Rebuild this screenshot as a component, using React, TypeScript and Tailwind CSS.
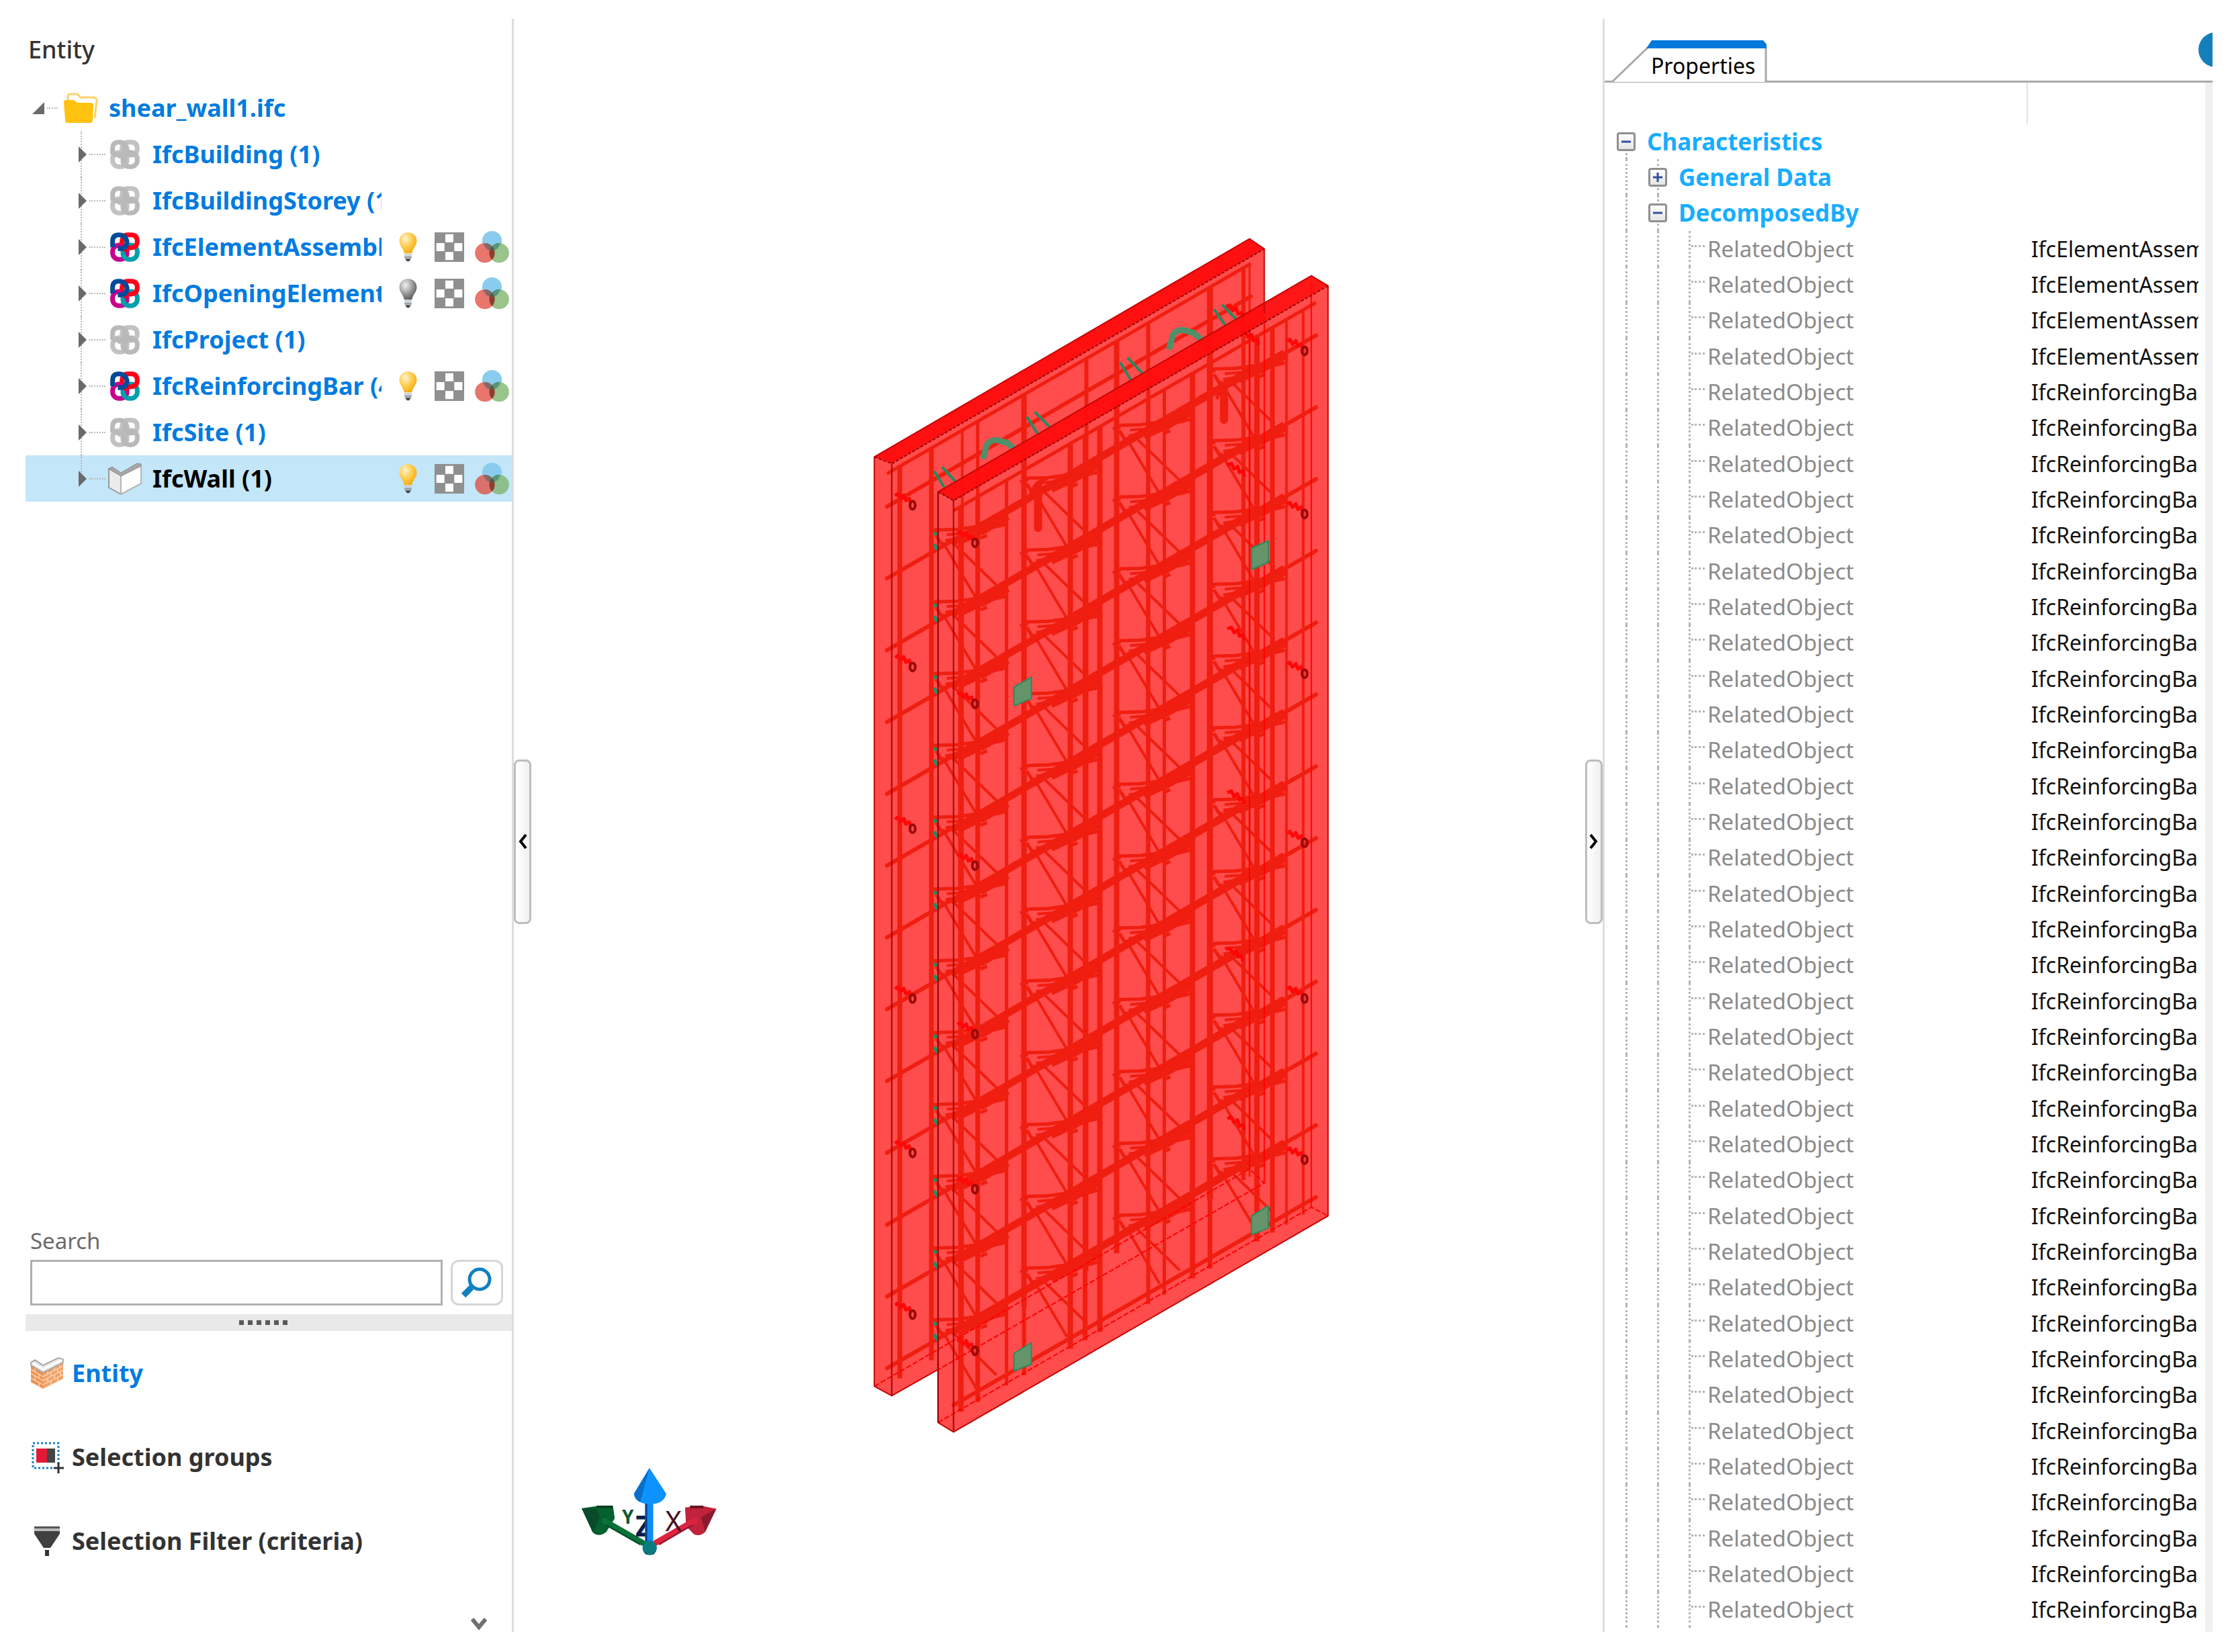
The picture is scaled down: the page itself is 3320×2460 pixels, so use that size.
import { useState } from 'react';
import type { ReactNode } from 'react';

type EntityIcon = 'muted' | 'ifc' | 'wall';

interface EntityRow {
  label: string;
  icon: EntityIcon;
  light?: 'on' | 'off';
}

interface PropertyRow {
  name: string;
  value?: string;
  depth: 0 | 1 | 2;
  open?: boolean;
}

const entities: EntityRow[] = [
  { label: 'IfcBuilding (1)', icon: 'muted' },
  { label: 'IfcBuildingStorey (1)', icon: 'muted' },
  { label: 'IfcElementAssembly (4)', icon: 'ifc', light: 'on' },
  { label: 'IfcOpeningElement (4)', icon: 'ifc', light: 'off' },
  { label: 'IfcProject (1)', icon: 'muted' },
  { label: 'IfcReinforcingBar (42)', icon: 'ifc', light: 'on' },
  { label: 'IfcSite (1)', icon: 'muted' },
  { label: 'IfcWall (1)', icon: 'wall', light: 'on' }
];

const properties: PropertyRow[] = [
  { name: 'Characteristics', depth: 0, open: true },
  { name: 'General Data', depth: 1, open: false },
  { name: 'DecomposedBy', depth: 1, open: true },
  ...Array.from({ length: 39 }, (_, i): PropertyRow => ({
    name: 'RelatedObject',
    value: i < 4 ? 'IfcElementAssembly' : 'IfcReinforcingBar',
    depth: 2
  }))
];

/* ---------- icons ---------- */

function FolderIcon() {
  return (
    <svg viewBox="0 0 52 46" className="h-[46px] w-[52px] shrink-0">
      <path d="M7 12V6q0-4 4-4h10l5 5h19q5 0 5 5l-3 26" fill="#fff" stroke="#fbd36b" strokeWidth="3" />
      <path d="M1 14q0-3 3-3h12l5 4h20q4 0 4 4l-1 22q0 4-4 4H7q-4 0-4-4z" fill="#ffc20e" />
    </svg>
  );
}

function IfcIcon({ muted }: { muted: boolean }) {
  const [blue, red, magenta, teal] = muted
    ? ['#b9b9b9', '#c2c2c2', '#c2c2c2', '#b9b9b9']
    : ['#004a98', '#ff0018', '#c8008c', '#009fae'];
  return (
    <svg viewBox="0 0 132 132" className="size-11 shrink-0" fill="none" strokeWidth="21">
      <rect x="11" y="57" width="64" height="64" rx="28" stroke={magenta} />
      <rect x="57" y="57" width="64" height="64" rx="28" stroke={teal} />
      <path d="M52 55q0-44 26-44h15q28 0 28 28t-28 30h-12q-10 0-10 18" stroke={red} />
      <path d="M11 66V39q0-28 28-28t36 28v4q0 26-24 30H34" stroke={blue} />
      {muted && <path d="M66 12v108M12 66h108" stroke={blue} strokeWidth="22" />}
    </svg>
  );
}

function WallIcon() {
  return (
    <svg viewBox="0 0 50 48" className="h-12 w-[50px] shrink-0" strokeLinejoin="round">
      <path d="M1 9l18 10v28L1 37z" fill="#ebebeb" stroke="#9a9a9a" strokeWidth="2" />
      <path d="M19 19L49 4v27L19 47z" fill="#fff" stroke="#b5b5b5" strokeWidth="2" />
      <path d="M1 9l5-3 13 9L43 1l6 1v3L19 20z" fill="#a8a8a8" stroke="#8a8a8a" strokeWidth="1" />
    </svg>
  );
}

function BulbIcon({ on }: { on: boolean }) {
  const id = on ? 'bulb-on' : 'bulb-off';
  return (
    <svg viewBox="0 0 80 132" className="h-11 w-[27px]">
      <defs>
        <radialGradient id={id} cx="0.35" cy="0.3" r="0.8">
          <stop offset="0" stopColor={on ? '#fff3cf' : '#f2f2f2'} />
          <stop offset="0.45" stopColor={on ? '#ffcf55' : '#a5a5a5'} />
          <stop offset="1" stopColor={on ? '#f5a300' : '#4c4c4c'} />
        </radialGradient>
      </defs>
      <path d="M40 1C16 1 1 18 1 38c0 22 19 34 22 56h34c3-22 22-34 22-56C79 18 64 1 40 1z" fill={`url(#${id})`} />
      <path d="M23 96h34v8H23z" fill="#c9d3dc" />
      <path d="M24 106h32v10H24z" fill="#9ba3aa" />
      <path d="M27 118h26l-8 12H35z" fill="#44474d" />
    </svg>
  );
}

function CheckerIcon() {
  return (
    <svg viewBox="0 0 132 132" className="size-11">
      <path d="M0 0h132v132H0z" fill="#8f8f8f" />
      <path d="M48 8h36v36H48zM8 48h36v36H8zM88 48h36v36H88zM48 88h36v36H48z" fill="#fff" />
    </svg>
  );
}

function ColorsIcon() {
  return (
    <svg viewBox="0 0 152 144" className="h-12 w-[51px]">
      <circle cx="76" cy="44" r="44" fill="#8accee" />
      <circle cx="108" cy="98" r="44" fill="#7fb56f" fillOpacity="0.8" />
      <circle cx="44" cy="98" r="44" fill="#e0483c" fillOpacity="0.75" />
      <path d="M76 68q12 12 12 30t-12 30q-12-12-12-30t12-30z" fill="#7a3020" fillOpacity="0.75" />
      <path d="M40 56q20-6 36 12q16-18 36-14q-10 34-36 34T40 56z" fill="#2b6f63" fillOpacity="0.5" />
    </svg>
  );
}

function SearchIcon() {
  return (
    <svg viewBox="0 0 46 46" className="size-[46px]" fill="none" stroke="#1180c0">
      <circle cx="27" cy="18" r="15" strokeWidth="5" />
      <path d="M15 30L3 42" strokeWidth="9" />
    </svg>
  );
}

function BrickIcon() {
  return (
    <svg viewBox="0 0 50 48" className="h-12 w-[50px]" strokeLinejoin="round">
      <path d="M1 10l18 12v25L1 37z" fill="#ee9350" />
      <path d="M19 22L49 6v26L19 47z" fill="#f0a368" />
      <path d="M1 18l18 11L49 13M1 24l18 11L49 19M1 31l18 10L49 26M7 15v7M13 25v7M7 28v7M13 38v6M26 19v6M36 13v7M44 10v6M31 23v6M41 17v6M26 31v7M36 26v7M45 22v6M31 35v6M41 30v6" fill="none" stroke="#fbdcc0" strokeWidth="1.3" />
      <path d="M1 8l6-4 12 8L42 1l7 2v5L19 23 1 12z" fill="#e6e6e6" stroke="#a0a0a0" strokeWidth="1.6" />
      <path d="M4 9l15 9L47 4" fill="none" stroke="#fff" strokeWidth="3" />
    </svg>
  );
}

function SelectionGroupsIcon() {
  return (
    <svg viewBox="0 0 50 48" className="h-12 w-[50px]">
      <rect x="4" y="3" width="38" height="37" fill="none" stroke="#1a7fc4" strokeWidth="3" strokeDasharray="3 3" />
      <path d="M9 11h16v21H9z" fill="#e01a36" />
      <path d="M25 11h12v21H25z" fill="#454545" />
      <path d="M33 36h16v8H33z" fill="#fff" />
      <path d="M42 32v16M35 40h15" stroke="#333" strokeWidth="3" />
    </svg>
  );
}

function FilterIcon() {
  return (
    <svg viewBox="0 0 50 48" className="h-12 w-[50px]">
      <path d="M6 2h38v3H6z" fill="#555" />
      <path d="M6 5h38v4H6z" fill="#bbb" />
      <path d="M6 9h38v4L30 34H20L6 13z" fill="#404040" />
      <path d="M22 37h6v9h-6z" fill="#333" />
    </svg>
  );
}

/* ---------- entity panel ---------- */

function EntityTree() {
  const [selected, setSelected] = useState('IfcWall (1)');

  return (
    <div className="text-4xl leading-[52px] font-bold text-[#007be0]">
      <div className="flex h-[69px] items-center pl-2.5">
        <svg viewBox="0 0 18 18" className="size-[18px]">
          <path d="M18 0v18H0z" fill="#6a6a6a" />
        </svg>
        <span className="mx-1 w-4 border-t-2 border-dotted border-[#b8b8b8]" />
        <span className="ml-1">
          <FolderIcon />
        </span>
        <span className="ml-4">shear_wall1.ifc</span>
      </div>
      <ul>
        {entities.map((row, i) => (
          <li
            key={row.label}
            className={`relative flex h-[69px] items-center pl-[79px] ${selected === row.label ? 'bg-[#c3e6f8] text-black' : ''}`}
          >
            <span className={`absolute left-[82px] border-l-2 border-dotted border-[#b8b8b8] ${i === entities.length - 1 ? 'top-0 h-8' : 'inset-y-0'}`} />
            <svg viewBox="0 0 12 24" className="relative h-6 w-3 shrink-0">
              <path d="M0 0l12 12L0 24z" fill="#6a6a6a" />
            </svg>
            <span className="mx-1 w-6 shrink-0 border-t-2 border-dotted border-[#b8b8b8]" />
            <span className="flex w-[50px] shrink-0 justify-center">
              {row.icon === 'wall' ? <WallIcon /> : <IfcIcon muted={row.icon === 'muted'} />}
            </span>
            <button
              type="button"
              onClick={() => setSelected(row.label)}
              className="ml-4 flex-1 overflow-hidden text-left leading-[52px] whitespace-nowrap"
            >
              {row.label}
            </button>
            <div className="flex w-[194px] shrink-0 items-center gap-4 pl-[26px]">
              {row.light && (
                <>
                  <button type="button" aria-label="Toggle visibility" className="mr-2.5">
                    <BulbIcon on={row.light === 'on'} />
                  </button>
                  <button type="button" aria-label="Transparency">
                    <CheckerIcon />
                  </button>
                  <button type="button" aria-label="Colour">
                    <ColorsIcon />
                  </button>
                </>
              )}
            </div>
          </li>
        ))}
      </ul>
    </div>
  );
}

function NavItem({ icon, label, active = false }: { icon: ReactNode; label: string; active?: boolean }) {
  return (
    <button
      type="button"
      className={`flex h-[125px] w-full items-center gap-3 pl-[7px] text-left text-4xl font-bold ${active ? 'text-[#007be0]' : 'text-[#333]'}`}
    >
      {icon}
      {label}
    </button>
  );
}

function EntityPanel() {
  return (
    <aside className="flex w-[727px] shrink-0 flex-col border-r-[3px] border-[#dedede]">
      <h2 className="h-[98px] pt-5 pl-1 text-4xl leading-[52px] font-medium text-[#333]">Entity</h2>
      <EntityTree />

      <form className="mt-auto pr-[13px] pb-[13px] pl-[7px]" onSubmit={(e) => e.preventDefault()}>
        <label htmlFor="entity-search" className="mb-1 block text-[33px] leading-[48px] text-[#6b6b6b]">
          Search
        </label>
        <div className="flex gap-3">
          <input id="entity-search" type="text" className="h-[68px] min-w-0 flex-1 border-[3px] border-[#b0b0b0] px-3 text-[33px] outline-none" />
          <button type="submit" aria-label="Search" className="flex h-[68px] w-[78px] items-center justify-center rounded-xl border-[3px] border-[#d6d6d6]">
            <SearchIcon />
          </button>
        </div>
      </form>

      <div className="flex h-[25px] items-center justify-center gap-1.5 bg-[#e9e9e9] pr-4">
        {Array.from({ length: 6 }, (_, i) => (
          <span key={i} className="size-[7px] bg-[#5a5a5a]" />
        ))}
      </div>

      <nav>
        <NavItem icon={<BrickIcon />} label="Entity" active />
        <NavItem icon={<SelectionGroupsIcon />} label="Selection groups" />
        <NavItem icon={<FilterIcon />} label="Selection Filter (criteria)" />
      </nav>
      <div className="flex h-[73px] items-end justify-end pr-[37px] pb-0.5">
        <button type="button" aria-label="More">
          <svg viewBox="0 0 24 20" className="h-5 w-6">
            <path d="M2 3l10 12L22 3" fill="none" stroke="#707070" strokeWidth="6" />
          </svg>
        </button>
      </div>
    </aside>
  );
}

/* ---------- 3d scene ---------- */

const STEP = 107;
const cells = Array.from({ length: 12 }, (_, i) => i);

// x, stroke width
const backBars = [
  [1340, 7], [1387, 7], [1433, 4], [1456, 5], [1525, 8], [1618, 6],
  [1663, 8], [1710, 6], [1802, 9], [1852, 6], [1861, 3]
];
const frontBars = [
  [1431, 8], [1456, 7], [1499, 5], [1525, 6], [1594, 8], [1616, 7], [1638, 8], [1710, 6],
  [1734, 5], [1776, 8], [1802, 7], [1872, 8], [1895, 7], [1916, 4], [1941, 4]
];

// top left corner of the first cell of each lattice girder
const girders = [[1390, 787], [1525, 710], [1663, 631], [1804, 547]];

const backTop = (x: number) => 690 - 0.577 * (x - 1328);
const frontTop = (x: number) => 745 - 0.575 * (x - 1420);

const anchors = [
  [1359, 752], [1359, 993], [1359, 1234], [1359, 1487], [1359, 1717], [1359, 1958],
  [1452, 808], [1452, 1048], [1452, 1289], [1452, 1540], [1452, 1771], [1452, 2012],
  [1943, 522], [1943, 765], [1943, 1003], [1943, 1255], [1943, 1487], [1943, 1727]
];
const innerAnchors = [[1852, 472], [1875, 512], [1854, 708], [1854, 952], [1854, 1196], [1852, 1430], [1854, 1682]];

const plates = [
  'M1864 816l25-11v32l-25 11z',
  'M1510 1023l26-15v32l-26 11z',
  'M1864 1811l25-15v33l-25 10z',
  'M1510 2016l26-16v32l-26 10z'
];

function GirderCell({ x, y }: { x: number; y: number }) {
  return (
    <g transform={`translate(${x} ${y})`}>
      <path d="M0 2L36 1L72 -4" strokeWidth="5" />
      <path d="M-6 7L6 5M20 9L72 5" strokeWidth="4" />
      <path d="M4 10L14 26M18 18L44 14" strokeWidth="5" />
      <path d="M40 17L74 1" strokeWidth="13" />
      <path d="M70 3L110 -20" strokeWidth="15" />
      <path d="M84 -1L110 -7M70 14L80 10" strokeWidth="5" />
      <path d="M14 20L64 104" strokeWidth="4" />
      <path d="M26 18L94 84" strokeWidth="4" />
    </g>
  );
}

function Wall() {
  return (
    <g strokeLinejoin="round">
      <g fill="#ff4c4c">
        <path d="M1302 680L1328 690L1883 370V1762L1328 2079L1302 2065z" />
        <path d="M1397 732L1420 745L1978 425V1811L1420 2133L1397 2119z" />
      </g>

      <g fill="none" stroke="#f01e10">
        {backBars.map(([x, w]) => (
          <path key={x} d={`M${x} ${backTop(x) + 12}V${backTop(x) + 1370}`} strokeWidth={w} />
        ))}
        <path d="M1321 705L1863 392" strokeWidth="5" />
        {cells.concat(12).map((i) => (
          <path key={i} d={`M1321 ${754 + i * STEP}L1863 ${441 + i * STEP}`} strokeWidth="6" strokeLinecap="round" />
        ))}
      </g>

      {/* lifting loops and stirrups showing above the front leaf */}
      <g fill="none" stroke="#26895f" strokeWidth="4">
        <path d="M1391 701l15 24M1403 695l20 22M1529 620l16 25M1541 613l22 22M1668 539l16 26M1679 532l22 23M1808 460l17 24M1820 453l21 22" />
        <path d="M1464 683l5-20q6-9 16-8l15 4 10 9M1741 520l6-22q6-8 15-7l15 4 13 11" stroke="#4f8f69" strokeWidth="9" />
      </g>

      <g fill="none" stroke="#f01e10">
        {frontBars.map(([x, w]) => (
          <path key={x} d={`M${x} ${frontTop(x) + 14}V${frontTop(x) + 1364}`} strokeWidth={w} />
        ))}
        <path d="M1420 760L1960 450" strokeWidth="5" />
        {cells.concat(12).map((i) => (
          <path key={i} d={`M1420 ${809 + i * STEP}L1960 ${499 + i * STEP}`} strokeWidth="6" strokeLinecap="round" />
        ))}
        {girders.map(([x, y]) => cells.map((i) => <GirderCell key={`${x}-${i}`} x={x} y={y + i * STEP} />))}
        <path d="M1823 579v46M1546 722v64" strokeWidth="12" strokeLinecap="round" />
        <path d="M1812 594q8-24 30-22M1534 738q6-22 26-26" strokeWidth="5" />
      </g>

      {/* hidden edges */}
      <g fill="none" stroke="#ff0000" strokeWidth="2">
        <path d="M1861 480V1741M1883 470V1762M1953 420V1798" />
        <path d="M1302 2065L1861 1741L1883 1762L1397 2040M1397 2119L1953 1798L1978 1811" strokeDasharray="8 3" />
      </g>

      <path d="M1302 680L1861 355L1883 370L1328 690z" fill="#ff1010" />
      <path d="M1397 732L1953 410L1978 425L1420 745z" fill="#ff0c0c" fillOpacity="0.96" />

      {anchors.map(([x, y]) => (
        <g key={`${x}-${y}`} fill="none">
          <path d={`M${x - 26} ${y - 14}l4 -3l4 7l5 -5l3 8l5 -3l2 6`} stroke="#ff0808" strokeWidth="5" />
          <ellipse cx={x} cy={y} rx="4" ry="6" stroke="#9c0a0a" strokeWidth="4" />
        </g>
      ))}
      {innerAnchors.map(([x, y]) => (
        <path key={`${x}-${y}`} d={`M${x - 26} ${y - 16}l6 -2l4 8l5 -4l3 9l5 -2l2 8`} fill="none" stroke="#ff0505" strokeWidth="5" />
      ))}

      {cells.map((i) => (
        <path key={i} d={`M1390 ${793 + i * STEP}l5 3M1391 ${810 + i * STEP}l5 9`} stroke="#1f8f62" strokeWidth="5" />
      ))}
      {plates.map((d) => (
        <path key={d} d={d} fill="#66946a" stroke="#2b8a61" strokeWidth="2" />
      ))}

      {/* outlines */}
      <g fill="none" strokeWidth="2">
        <path d="M1302 2065V680L1861 355L1883 370V466M1302 2065L1328 2079L1397 2040" stroke="#c40606" />
        <path d="M1397 2119V732L1953 410L1978 425V1811L1420 2133z" stroke="#c40606" />
        <path d="M1302 680L1328 690L1883 370M1397 732L1420 745L1978 425" stroke="#a00505" strokeDasharray="5 2" />
        <path d="M1328 690V2079M1397 732V2119M1420 745V2133" stroke="#a00505" />
      </g>
    </g>
  );
}

function AxisGizmo() {
  return (
    <g transform="translate(840 2160) scale(0.3333)">
      <path d="M78 260L145 250H218L226 305L188 366Q155 392 128 368z" fill="#04602f" />
      <path d="M78 260L145 262L160 300L128 368z" fill="#0a4a2a" />
      <path d="M145 248h72v10h-72z" fill="#083c22" />
      <path d="M180 316L350 414" stroke="#0a7238" strokeWidth="26" strokeLinecap="round" />
      <path d="M186 334L340 422" stroke="#064d27" strokeWidth="7" />
      <path d="M540 256L620 250L680 262L630 366Q608 388 580 376L545 340z" fill="#c1223c" />
      <path d="M680 262L630 366L612 300z" fill="#8f1a2e" />
      <path d="M562 248h60v12h-60z" fill="#6d1524" />
      <path d="M585 314L410 414" stroke="#dc2440" strokeWidth="26" strokeLinecap="round" />
      <path d="M574 334L424 422" stroke="#8f1a2e" strokeWidth="7" />
      <g fontFamily="'Noto Sans', sans-serif" fontWeight="700" fontSize="84">
        <text x="258" y="330" fill="#0f5a30">Y</text>
        <text x="318" y="386" fontSize="128" fill="#0a1f4d">Z</text>
        <text x="452" y="362" fontSize="124" fontWeight="400" fill="#4a0f1c">X</text>
      </g>
      <path d="M362 236H398V424H362z" fill="#0d8cf5" />
      <path d="M362 236H371V424H362z" fill="#0a3f86" />
      <path d="M381 80L456 195Q448 240 384 242Q320 240 312 195z" fill="#0c93ff" />
      <path d="M381 80L312 195Q314 222 340 232z" fill="#0a6fc8" />
      <circle cx="382" cy="437" r="32" fill="#0b7c80" />
      <path d="M352 448Q382 484 412 448L400 466H364z" fill="#064a50" />
    </g>
  );
}

function CollapseHandle({ side }: { side: 'left' | 'right' }) {
  return (
    <button
      type="button"
      aria-label={side === 'left' ? 'Collapse entity panel' : 'Collapse properties panel'}
      className="mt-12 flex h-[245px] w-[26px] shrink-0 items-center justify-center self-center rounded-lg border-[3px] border-[#bdbdbd] bg-linear-to-r from-white to-[#f0f0f0]"
    >
      <svg viewBox="0 0 14 24" className="h-6 w-3.5 shrink-0">
        <path d={side === 'left' ? 'M12 2L4 12l8 10' : 'M2 2l8 10L2 22'} fill="none" stroke="#000" strokeWidth="4" />
      </svg>
    </button>
  );
}

function Viewport() {
  return (
    <main className="flex min-w-0 flex-1">
      <CollapseHandle side="left" />
      <svg viewBox="791 28 1570 2402" className="h-full min-w-0 flex-1" role="img" aria-label="3D model">
        <Wall />
        <AxisGizmo />
      </svg>
      <CollapseHandle side="right" />
    </main>
  );
}

/* ---------- properties panel ---------- */

function Expander({ open }: { open: boolean }) {
  return (
    <button
      type="button"
      aria-label={open ? 'Collapse' : 'Expand'}
      className="relative size-7 rounded-sm border-[3px] border-[#8f8f8f] bg-linear-to-b from-white to-[#e4e4e4]"
    >
      <svg viewBox="0 0 22 22" className="size-[22px]">
        <path d={open ? 'M4 11h14' : 'M4 11h14M11 4v14'} stroke="#2f4f9f" strokeWidth="3" />
      </svg>
    </button>
  );
}

function Guide({ className = 'inset-y-0' }: { className?: string }) {
  return <span className={`absolute left-[23px] border-l-[3px] border-dotted border-[#b4b4b4] ${className}`} />;
}

function PropertyName({ row, tall }: { row: PropertyRow; tall: boolean }) {
  const group = row.depth < 2;
  return (
    <div className={`flex items-center pl-2 ${tall ? 'h-[54px]' : 'h-[53px]'}`}>
      {row.depth > 0 && (
        <span className="relative w-[47px] self-stretch">
          <Guide />
        </span>
      )}
      {row.depth > 1 && (
        <span className="relative w-[47px] self-stretch">
          <Guide />
        </span>
      )}
      <span className="relative flex w-[47px] items-center justify-center self-stretch">
        <Guide className={row.depth === 0 ? 'top-1/2 bottom-0' : 'inset-y-0'} />
        {group ? (
          <Expander open={!!row.open} />
        ) : (
          <span className="absolute top-[21px] right-0 w-5 border-t-[3px] border-dotted border-[#b4b4b4]" />
        )}
      </span>
      <span className={group ? 'pl-2 text-[35px] leading-[52px] font-bold text-[#17adff]' : 'pl-1 text-[33px] leading-[52px] text-[#8a8a8a]'}>
        {row.name}
      </span>
    </div>
  );
}

function PropertiesPanel() {
  return (
    <aside className="flex w-[908px] shrink-0 flex-col border-l-[3px] border-[#dedede]">
      <div className="flex h-[95px] shrink-0 items-end border-b-[3px] border-[#a9a9a9] pl-2.5">
        <button type="button" className="relative -mb-[3px] h-[63px] w-[232px] pt-3 pl-[59px] text-left text-[32px] leading-[48px]">
          <svg viewBox="0 0 232 63" className="absolute inset-0 size-full">
            <path d="M1 62L54 11H230V62z" fill="#fff" />
            <path d="M1 62L54 11M230 11V62" fill="none" stroke="#a9a9a9" strokeWidth="3" />
            <path d="M60 0H226L231 6V12H52z" fill="#0078dc" />
          </svg>
          <span className="relative">Properties</span>
        </button>
        <button type="button" aria-label="Help" className="mb-5 ml-auto h-[52px] w-[21px] overflow-hidden">
          <span className="block size-[52px] rounded-full bg-[#1480bb]" />
        </button>
      </div>

      <div className="flex min-h-0 flex-1">
        <div className="min-w-0 flex-1 overflow-hidden">
          <table className="w-full table-fixed border-collapse">
            <colgroup>
              <col />
              <col className="w-[265px]" />
            </colgroup>
            <thead>
              <tr className="h-[61px]">
                <th aria-label="Name" />
                <th aria-label="Value" className="border-l-2 border-[#e2e2e2]" />
              </tr>
            </thead>
            <tbody>
              {properties.map((row, i) => (
                <tr key={i}>
                  <td className="p-0">
                    <PropertyName row={row} tall={i % 3 === 2} />
                  </td>
                  <td className="p-0">
                    <div className="mr-2.5 ml-1.5 overflow-hidden text-[32px] leading-[52px] whitespace-nowrap text-[#111]">{row.value}</div>
                  </td>
                </tr>
              ))}
            </tbody>
          </table>
        </div>
        <div className="w-[11px] bg-[#f0f0f0]" />
      </div>
    </aside>
  );
}

export default function App() {
  return (
    <div className="flex h-screen overflow-hidden bg-white pt-7 pr-[26px] pb-[30px] pl-[38px] font-['Noto_Sans',sans-serif] text-black">
      <EntityPanel />
      <Viewport />
      <PropertiesPanel />
    </div>
  );
}
